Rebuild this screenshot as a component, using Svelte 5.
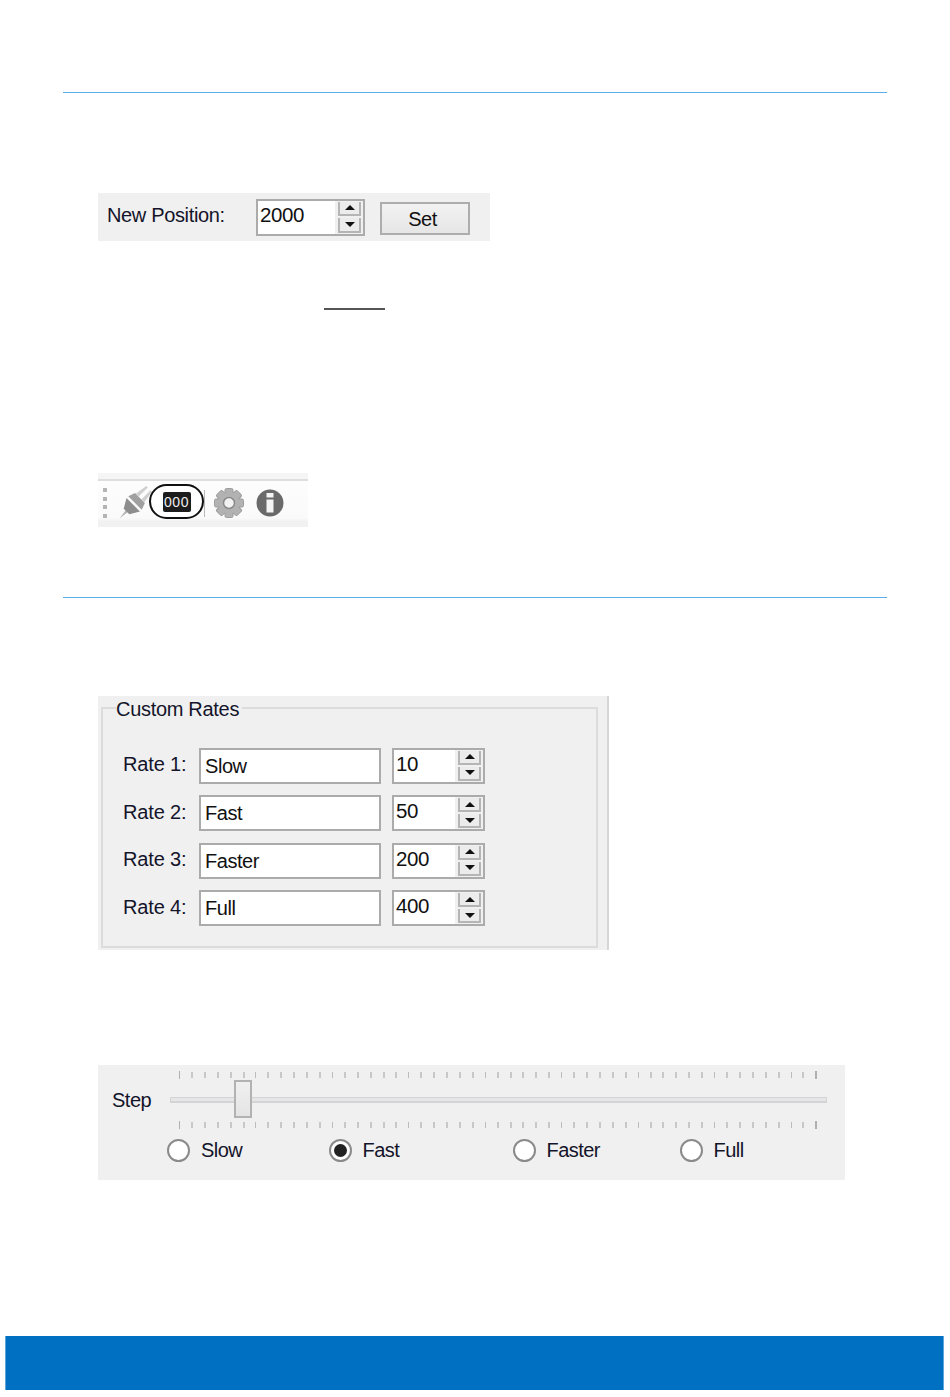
<script>
  const rates = [
    { label: 'Rate 1:', name: 'Slow', value: '10' },
    { label: 'Rate 2:', name: 'Fast', value: '50' },
    { label: 'Rate 3:', name: 'Faster', value: '200' },
    { label: 'Rate 4:', name: 'Full', value: '400' }
  ];
  const speeds = [
    { name: 'Slow', cls: 'slow', checked: false },
    { name: 'Fast', cls: 'fast', checked: true },
    { name: 'Faster', cls: 'faster', checked: false },
    { name: 'Full', cls: 'full', checked: false }
  ];
  const ticks = Array.from({ length: 51 }, (_, i) => i);
  const teeth = [0, 45, 90, 135, 180, 225, 270, 315];
</script>

{#snippet spinButtons()}
  <div class="spin-btns">
    <div class="spin-btn"><span class="arrow up"></span></div>
    <div class="spin-btn"><span class="arrow down"></span></div>
  </div>
{/snippet}

{#snippet tickRow()}
  <div class="ticks">
    {#each ticks as t (t)}
      <span class="tick" class:major={t % 6 === 0} class:end={t === 0 || t === 50}></span>
    {/each}
  </div>
{/snippet}

<div class="page">
  <div class="rule first"></div>

  <div class="position-bar">
    <span class="label">New Position:</span>
    <div class="spin pos-spin">
      <span class="spin-value">2000</span>
      {@render spinButtons()}
    </div>
    <button class="set-btn">Set</button>
  </div>

  <div class="short-line"></div>

  <div class="toolbar">
    <div class="grip">
      <span></span><span></span><span></span><span></span>
    </div>
    <svg class="plug" width="34" height="34" viewBox="0 0 34 34">
      <g transform="rotate(-45 17 17)">
        <path d="M-5 17 L6 15.5 L6 18.5 Z" fill="#b4b4b4" />
        <path d="M5 13 L14.5 7.5 L14.5 26.5 L5 21 Z" fill="#8e8e8e" />
        <path d="M17 7.5 L24 10 L24 24 L17 26.5 Z" fill="#a0a0a0" />
        <path d="M24 11 L37 13 L37 15 L24 15 Z" fill="#cfcfcf" />
        <path d="M24 19 L37 19 L37 21 L24 23 Z" fill="#cfcfcf" />
      </g>
    </svg>
    <div class="counter-oval">
      <div class="counter">000</div>
    </div>
    <span class="tool-sep"></span>
    <svg class="gear" width="32" height="32" viewBox="0 0 32 32">
      {#each teeth as a (a)}
        <rect x="12" y="1.5" width="8" height="8" rx="1.5" fill="#b2b2b2" stroke="#9c9c9c" transform="rotate({a} 16 16)" />
      {/each}
      <circle cx="16" cy="16" r="10.5" fill="#b2b2b2" />
      <circle cx="16" cy="16" r="5.5" fill="#f2f2f2" stroke="#8a8a8a" stroke-width="1.5" />
    </svg>
    <svg class="info" width="28" height="28" viewBox="0 0 28 28">
      <circle cx="14" cy="14" r="13.5" fill="#6a6a6a" />
      <rect x="10.5" y="4" width="7" height="4.5" fill="#f4f4f4" />
      <rect x="10.5" y="10.5" width="7" height="13" fill="#f4f4f4" />
    </svg>
  </div>

  <div class="rule second"></div>

  <div class="rates-panel">
    <fieldset class="rates-box">
      <legend>Custom Rates</legend>
      <div class="rate-rows">
        {#each rates as rate (rate.label)}
          <div class="rate-row">
            <span class="rate-label">{rate.label}</span>
            <div class="name-field">{rate.name}</div>
            <div class="spin rate-spin">
              <span class="spin-value">{rate.value}</span>
              {@render spinButtons()}
            </div>
          </div>
        {/each}
      </div>
    </fieldset>
  </div>

  <div class="step-panel">
    <div class="slider-row">
      <span class="step-label">Step</span>
      <div class="slider">
        {@render tickRow()}
        <div class="track"></div>
        {@render tickRow()}
        <div class="thumb"></div>
      </div>
    </div>
    <div class="radios">
      {#each speeds as s (s.name)}
        <div class="radio-item {s.cls}">
          <span class="radio" class:checked={s.checked}></span>
          <span>{s.name}</span>
        </div>
      {/each}
    </div>
  </div>

  <div class="footer-band"></div>
</div>

<style>
  :global(body) {
    margin: 0;
    background: #fff;
  }

  .page {
    position: relative;
    width: 950px;
    height: 1397px;
    padding-top: 92px;
    box-sizing: border-box;
    overflow: hidden;
    font-family: "Liberation Sans", Arial, sans-serif;
    font-size: 20px;
    letter-spacing: -0.35px;
    color: #14142a;
  }

  .rule {
    height: 1px;
    width: 824px;
    margin-left: 63px;
    background: #5aaeea;
  }

  .position-bar {
    display: flex;
    align-items: center;
    width: 392px;
    height: 48px;
    margin: 100px 0 0 98px;
    padding-left: 9px;
    box-sizing: border-box;
    background: #f0f0f0;
  }

  .label {
    width: 149px;
    position: relative;
    top: -2px;
  }

  .spin {
    display: flex;
    justify-content: space-between;
    box-sizing: border-box;
    background: #fff;
    border: 2px solid #ababab;
  }

  .pos-spin {
    width: 109px;
    height: 37px;
  }

  .rate-spin {
    width: 93px;
    height: 36px;
  }

  .spin-value {
    padding: 0 0 6px 2px;
    line-height: 28px;
    font-size: 20.5px;
    color: #111;
    letter-spacing: -0.4px;
  }

  .spin-btns {
    display: flex;
    flex-direction: column;
    justify-content: center;
    gap: 2px;
    width: 28px;
    padding: 1px 2px 1px 3px;
    box-sizing: border-box;
    background: #f0f0f0;
  }

  .spin-btn {
    flex: 1;
    display: flex;
    align-items: center;
    justify-content: center;
    border-left: 2px solid #b5b5b5;
    border-right: 2px solid #b5b5b5;
    border-bottom: 2px solid #b5b5b5;
    background: #ececec;
  }

  .arrow {
    width: 0;
    height: 0;
    border-left: 5.5px solid transparent;
    border-right: 5.5px solid transparent;
  }

  .arrow.up {
    border-bottom: 5px solid #111;
  }

  .arrow.down {
    border-top: 5px solid #111;
  }

  .set-btn {
    width: 90px;
    height: 33px;
    margin: 0 0 0 15px;
    padding: 2px 5px 0 0;
    position: relative;
    top: 1px;
    border: 2px solid #adadad;
    background: linear-gradient(#f2f2f2, #e6e6e6);
    font: inherit;
    letter-spacing: -0.5px;
    color: #111;
    border-radius: 0;
  }

  .short-line {
    width: 61px;
    height: 2px;
    margin: 67px 0 0 324px;
    background: #555;
  }

  .toolbar {
    display: flex;
    align-items: center;
    position: relative;
    width: 210px;
    height: 48px;
    margin: 169px 0 0 98px;
    padding-bottom: 2px;
    box-sizing: border-box;
    border-top: 2px solid #dedede;
    background: linear-gradient(#fdfdfd 0, #fafafa 80%, #f1f1f1 88%);
    box-shadow: 0 -6px 0 #f5f5f5;
  }

  .grip {
    display: flex;
    flex-direction: column;
    gap: 4.5px;
    margin: 0 0 0 5px;
  }

  .grip span {
    width: 4px;
    height: 4px;
    background: #b4b4b4;
  }

  .plug {
    margin-left: 11px;
    flex-shrink: 0;
  }

  .counter-oval {
    display: flex;
    align-items: center;
    justify-content: center;
    width: 55px;
    height: 35px;
    margin: 0 0 3px -3px;
    box-sizing: border-box;
    border: 2px solid #111;
    border-radius: 18px;
    background: #fff;
    flex-shrink: 0;
  }

  .counter {
    width: 28px;
    height: 20px;
    border-radius: 2px;
    background: #1c1c1c;
    color: #eee;
    font-family: "Liberation Sans", sans-serif;
    font-size: 14px;
    letter-spacing: 0.5px;
    line-height: 20px;
    text-align: center;
  }

  .tool-sep {
    width: 1px;
    height: 27px;
    background: #b9b9b9;
    flex-shrink: 0;
  }

  .gear {
    margin-left: 8px;
    flex-shrink: 0;
  }

  .info {
    margin-left: 11px;
    flex-shrink: 0;
  }

  .second {
    margin-top: 70px;
  }

  .rates-panel {
    width: 511px;
    height: 254px;
    margin: 98px 0 0 98px;
    padding: 2px 9px 0 3px;
    box-sizing: border-box;
    background: #f0f0f0;
    border-right: 2px solid #d6d6d6;
  }

  .rates-box {
    height: 250px;
    margin: 0;
    padding: 0 0 0 20px;
    box-sizing: border-box;
    border: 2px solid #dcdcdc;
  }

  legend {
    position: relative;
    top: 1px;
    margin-left: -7px;
    padding: 0 3px 0 0;
    line-height: 20px;
    font-size: 20px;
    letter-spacing: -0.3px;
  }

  .rate-rows {
    display: flex;
    flex-direction: column;
    gap: 11.5px;
    margin-top: 29.9px;
  }

  .rate-row {
    display: flex;
    align-items: center;
    height: 36px;
  }

  .rate-label {
    width: 76px;
    position: relative;
    top: -1px;
    white-space: nowrap;
    letter-spacing: -0.15px;
  }

  .name-field {
    width: 182px;
    height: 36px;
    margin-right: 11px;
    padding-left: 4px;
    box-sizing: border-box;
    border: 2px solid #ababab;
    background: #fff;
    line-height: 32px;
    color: #111;
    letter-spacing: -0.45px;
  }

  .step-panel {
    width: 747px;
    height: 115px;
    margin: 115px 0 0 98px;
    padding: 6px 0 0 14px;
    box-sizing: border-box;
    background: #f0f0f0;
  }

  .slider-row {
    display: flex;
    align-items: center;
  }

  .step-label {
    width: 58px;
    position: relative;
    top: 0;
    letter-spacing: -0.5px;
  }

  .slider {
    position: relative;
    display: flex;
    flex-direction: column;
    width: 657px;
  }

  .ticks {
    display: flex;
    justify-content: space-between;
    height: 8px;
    margin: 0 9px;
    align-items: center;
  }

  .tick {
    width: 2px;
    height: 6px;
    background: #c8c8c8;
  }

  .tick.major {
    width: 1px;
    background: #bcbcbc;
  }

  .tick.end {
    height: 8px;
    background: #b0b0b0;
  }

  .track {
    height: 6px;
    margin: 18px 0;
    box-sizing: border-box;
    border: 1px solid #d4d4d4;
    border-bottom-width: 2px;
    background: #e6e6e8;
  }

  .thumb {
    position: absolute;
    left: 64px;
    top: 9px;
    width: 18px;
    height: 38px;
    box-sizing: border-box;
    border: 2px solid #b2b2b2;
    background: linear-gradient(#f0f0f0, #e4e4e4);
  }

  .radios {
    display: flex;
    margin: 10px 0 0 55px;
  }

  .radio-item {
    display: flex;
    align-items: center;
    gap: 11px;
    letter-spacing: -0.55px;
  }

  .radio-item.slow {
    width: 161.5px;
  }

  .radio-item.fast {
    width: 184px;
  }

  .radio-item.faster {
    width: 167px;
  }

  .radio {
    display: flex;
    align-items: center;
    justify-content: center;
    width: 23px;
    height: 23px;
    box-sizing: border-box;
    border: 2px solid #8a8a8a;
    border-radius: 50%;
    background: #fff;
  }

  .radio.checked::after {
    content: '';
    width: 13px;
    height: 13px;
    border-radius: 50%;
    background: #222;
  }

  .footer-band {
    position: absolute;
    left: 5px;
    top: 1336px;
    width: 939px;
    height: 54px;
    box-sizing: border-box;
    background: #0070c3;
    border-left: 1px solid #5aa6e0;
    border-right: 1px solid #5aa6e0;
  }
</style>
